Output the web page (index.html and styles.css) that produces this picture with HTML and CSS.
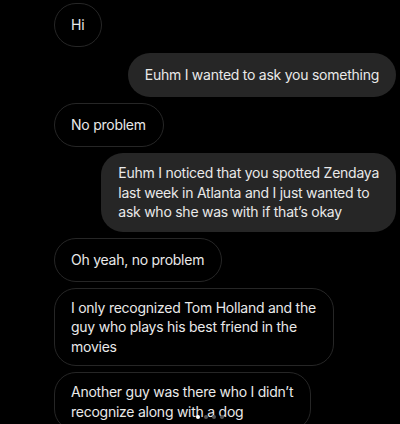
FILE: index.html
```html
<!DOCTYPE html>
<html>
  <head>
    <title>Messages</title>
    <link rel="stylesheet" href="styles.css">
  </head>
  <body>
    <div class="thread">
      <div class="msg received">Hi</div>
      <div class="msg sent">Euhm I wanted to ask you something</div>
      <div class="msg received">No problem</div>
      <div class="msg sent">Euhm I noticed that you spotted Zendaya<br>last week in Atlanta and I just wanted to<br>ask who she was with if that’s okay</div>
      <div class="msg received">Oh yeah, no problem</div>
      <div class="msg received">I only recognized Tom Holland and the<br>guy who plays his best friend in the<br>movies</div>
      <div class="msg received">Another guy was there who I didn’t<br>recognize along with a dog</div>
    </div>

    <div class="dots">
      <span class="dot active"></span>
      <span class="dot"></span>
      <span class="dot"></span>
      <span class="dot"></span>
    </div>
  </body>
</html>
```

FILE: styles.css
```css
body {
  margin: 0;
  background-color: #000;
  font-family: "Inter", "Roboto", sans-serif;
  color: #e9e9e9;
  height: 424px;
  overflow: hidden;
  position: relative;
}

.thread {
  display: flex;
  flex-direction: column;
  gap: 6px;
  padding: 3px 4px 0 54px;
}

.msg {
  box-sizing: border-box;
  min-height: 44px;
  max-width: 300px;
  display: flex;
  align-items: center;
  padding: 10px 16px;
  border-radius: 22px;
  font-size: 14px;
  line-height: 19.5px;
  letter-spacing: -0.25px;
  white-space: nowrap;
}

.received {
  align-self: flex-start;
  border: 1px solid #262626;
  padding: 9px 17px 9px 16px;
}

.sent {
  align-self: flex-end;
  background-color: #262626;
  padding: 10px 17px;
}

.dots {
  position: absolute;
  left: 196px;
  top: 415px;
  display: flex;
  gap: 4px;
}

.dot {
  width: 4px;
  height: 4px;
  border-radius: 50%;
  background-color: #555;
}

.dot.active {
  background-color: #fff;
}
```
